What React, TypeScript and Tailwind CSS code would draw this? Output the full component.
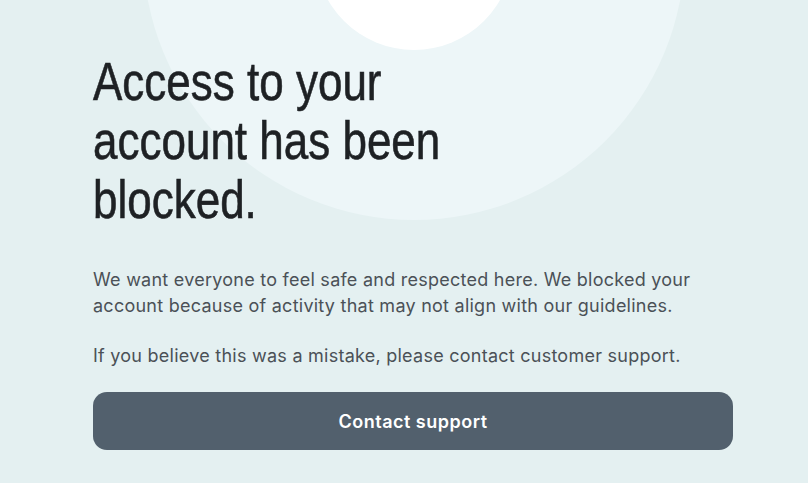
export default function App() {
  return (
    <div className="relative h-[483px] w-full overflow-hidden bg-[#e4f0f1]">
      {/* backdrop rings */}
      <div className="pointer-events-none absolute left-[143px] top-[-322px] h-[542px] w-[542px] rounded-full bg-[#edf6f8]" />
      <div className="pointer-events-none absolute left-[315px] top-[-148px] h-[198px] w-[198px] rounded-full bg-white" />

      <div className="relative ml-[93px] flex w-[640px] flex-col pt-[52px]">
        <h1
          className="origin-left scale-x-[0.83] text-[53px] font-normal leading-[59px] text-[#1e2124] [-webkit-text-stroke:0.6px_#1e2124]"
          style={{ fontFamily: '"Liberation Sans", Arial, sans-serif' }}
        >
          Access to your
          <br />
          account has been
          <br />
          blocked.
        </h1>

        <div
          className="mt-[38px] flex flex-col gap-[24px] text-[18px] leading-[26px] tracking-[0.25px] text-[#4b5157]"
          style={{ fontFamily: 'Inter, "Noto Sans", sans-serif' }}
        >
          <p>
            We want everyone to feel safe and respected here. We blocked your account because of activity that may not align
            with our guidelines.
          </p>
          <p>If you believe this was a mistake, please contact customer support.</p>
        </div>

        <button
          type="button"
          className="mt-[23px] flex h-[58px] w-full items-center justify-center rounded-[14px] bg-[#52606d] text-[18px] font-semibold tracking-[0.5px] text-white"
          style={{ fontFamily: 'Inter, "Noto Sans", sans-serif' }}
        >
          Contact support
        </button>
      </div>
    </div>
  );
}
